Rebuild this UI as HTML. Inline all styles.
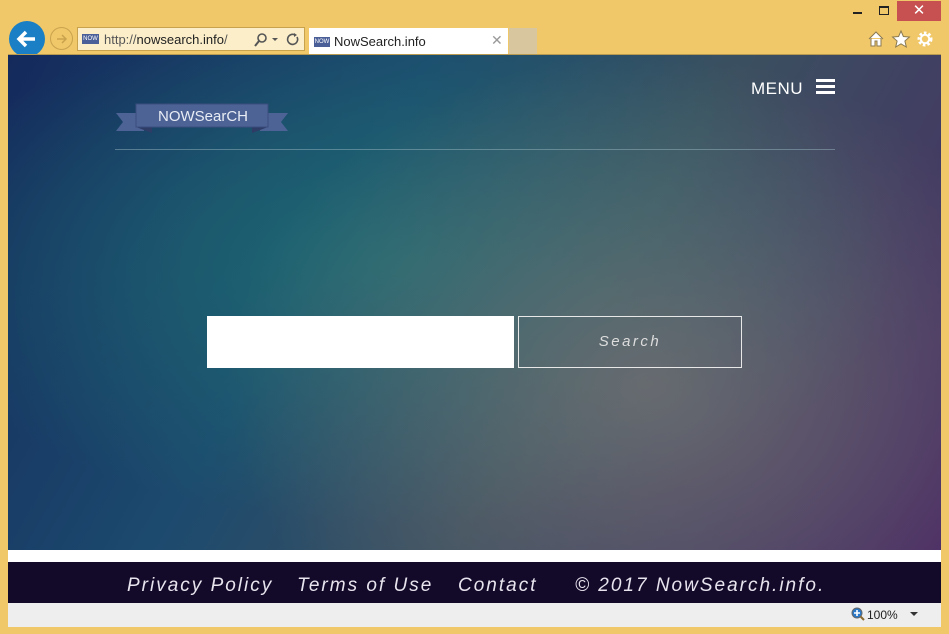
<!DOCTYPE html>
<html><head><meta charset="utf-8"><style>
*{margin:0;padding:0;box-sizing:border-box}
body{width:949px;height:634px;background:#f0c869;position:relative;overflow:hidden;font-family:"Liberation Sans",sans-serif}
.abs{position:absolute}
#content{left:8px;top:55px;width:933px;height:495px;background:
radial-gradient(ellipse 420px 330px at 640px 330px,rgba(120,115,115,.75),rgba(120,115,115,0) 100%),
radial-gradient(ellipse 500px 260px at 390px 210px,rgba(30,110,115,.9),rgba(30,110,115,0) 100%),
linear-gradient(120deg,#142a5c 0%,#1c4a6e 35%,#3a5060 60%,#4a2a64 100%);}
#white{left:8px;top:550px;width:933px;height:12px;background:#fff}
#footer{left:8px;top:562px;width:933px;height:41px;background:#130a2a;color:#e8e4ee;font-style:italic;font-size:19px;letter-spacing:2px;line-height:20px}
#footer span{top:14px}
#status{left:8px;top:603px;width:933px;height:24px;background:#eeeeee;font-size:12px}
</style></head><body>
<div class="abs" style="left:853px;top:12px;width:9px;height:2px;background:#222"></div>
<div class="abs" style="left:879px;top:6px;width:10px;height:9px;border:1px solid #222;border-top-width:2px"></div>
<div class="abs" style="left:897px;top:1px;width:44px;height:20px;background:#c75050;color:#fff;text-align:center;font-size:15px;line-height:20px">✕</div>
<div class="abs" style="left:9px;top:21px;width:36px;height:36px;border-radius:50%;background:#1a7fc4"></div>
<svg class="abs" style="left:15px;top:27px" width="24" height="24"><path d="M20 12H5M11 5L4 12L11 19" stroke="#fff" stroke-width="3.5" fill="none"/></svg>
<div class="abs" style="left:50px;top:27px;width:23px;height:23px;border-radius:50%;border:1px solid #c9a24e"></div>
<svg class="abs" style="left:54px;top:31px" width="16" height="16"><path d="M3 8H12M8 4L12 8L8 12" stroke="#c9a24e" stroke-width="1.5" fill="none"/></svg>
<div class="abs" style="left:77px;top:27px;width:228px;height:24px;background:#fbeec9;border:1px solid #c9a24e"></div>
<div class="abs" style="left:82px;top:34px;width:17px;height:10px;background:#4a5f98;color:#fff;font-size:6px;text-align:center;line-height:10px">NOW</div>
<div class="abs" style="left:104px;top:32px;font-size:13px;color:#555">http://<span style="color:#222">nowsearch.info</span>/</div>
<svg class="abs" style="left:253px;top:32px" width="48" height="16"><circle cx="9" cy="6" r="4" stroke="#555" stroke-width="1.6" fill="none"/><path d="M6 9L2 14" stroke="#555" stroke-width="2"/><path d="M19 6h6l-3 3z" fill="#555"/><path d="M44 5a5 5 0 1 1-2-2" stroke="#555" stroke-width="1.6" fill="none"/><path d="M41 1l3 2-3 2z" fill="#555"/></svg>
<div class="abs" style="left:309px;top:28px;width:199px;height:27px;background:#fff"></div>
<div class="abs" style="left:314px;top:37px;width:16px;height:10px;background:#4a5f98;color:#fff;font-size:6px;text-align:center;line-height:10px">NOW</div>
<div class="abs" style="left:334px;top:34px;font-size:13px;color:#222">NowSearch.info</div>
<div class="abs" style="left:491px;top:32px;font-size:14px;color:#999">✕</div>
<div class="abs" style="left:509px;top:28px;width:28px;height:27px;background:#d8c69e"></div>
<svg class="abs" style="left:866px;top:29px" width="72" height="20"><path d="M3 10L10 3L17 10M5 9v8h4v-5h2v5h4V9" fill="#fff" stroke="#8a7a50" stroke-width="1"/><path d="M35 2l2.4 5.5 6 .5-4.5 4 1.4 6-5.3-3.2-5.3 3.2 1.4-6-4.5-4 6-.5z" fill="#fff" stroke="#8a7a50" stroke-width="1"/><circle cx="59" cy="10" r="6" fill="none" stroke="#fff" stroke-width="3" stroke-dasharray="2.5 2"/><circle cx="59" cy="10" r="4.2" fill="none" stroke="#fff" stroke-width="2"/></svg>
<div class="abs" style="left:8px;top:54px;width:933px;height:1px;background:#b89a50"></div>

<div id="content" class="abs">
  <div class="abs" style="left:743px;top:24px;color:#fff;font-size:17px;letter-spacing:.5px">MENU</div>
  <div class="abs" style="left:808px;top:24px;width:19px;height:3px;background:#fff;box-shadow:0 6px 0 #fff,0 12px 0 #fff"></div>
  <svg class="abs" style="left:106px;top:48px" width="176" height="32"><path d="M2 10H30V28H2L9 19Z" fill="#4d6396"/><path d="M174 10H146V28H174L167 19Z" fill="#4d6396"/><path d="M22 24L38 30V24Z" fill="#2e3c66"/><path d="M154 24L138 30V24Z" fill="#2e3c66"/><rect x="22" y="1" width="132" height="23" fill="#4d6396" stroke="#3a4c7e"/><text x="44" y="18" textLength="90" lengthAdjust="spacingAndGlyphs" fill="#e8ecf4" font-family="Liberation Sans Narrow, Liberation Sans, sans-serif" font-size="15">NOWSearCH</text></svg>
  <div class="abs" style="left:107px;top:94px;width:720px;height:1px;background:rgba(150,180,190,.5)"></div>
  <div class="abs" style="left:199px;top:261px;width:307px;height:52px;background:#fff"></div>
  <div class="abs" style="left:510px;top:261px;width:224px;height:52px;border:1px solid #e8e8e8;color:#ddd;font-style:italic;font-size:15px;letter-spacing:2.5px;text-align:center;line-height:50px">Search</div>
</div>
<div id="white" class="abs"></div>
<div id="footer" class="abs">
  <span class="abs" style="left:119px">Privacy Policy</span>
  <span class="abs" style="left:289px">Terms of Use</span>
  <span class="abs" style="left:450px">Contact</span>
  <span class="abs" style="left:567px">© 2017 NowSearch.info.</span>
</div>
<div id="status" class="abs">
  <svg class="abs" style="left:843px;top:4px" width="14" height="14"><circle cx="6" cy="6" r="5" fill="#2a78c8" stroke="#666"/><path d="M6 3v6M3 6h6" stroke="#fff" stroke-width="1.6"/><path d="M9.5 9.5L13 13" stroke="#8a6a30" stroke-width="2"/></svg>
  <span class="abs" style="left:859px;top:5px;color:#222">100%</span>
  <svg class="abs" style="left:902px;top:9px" width="8" height="5"><path d="M0 0h8L4 4z" fill="#333"/></svg>
</div>
</body></html>
